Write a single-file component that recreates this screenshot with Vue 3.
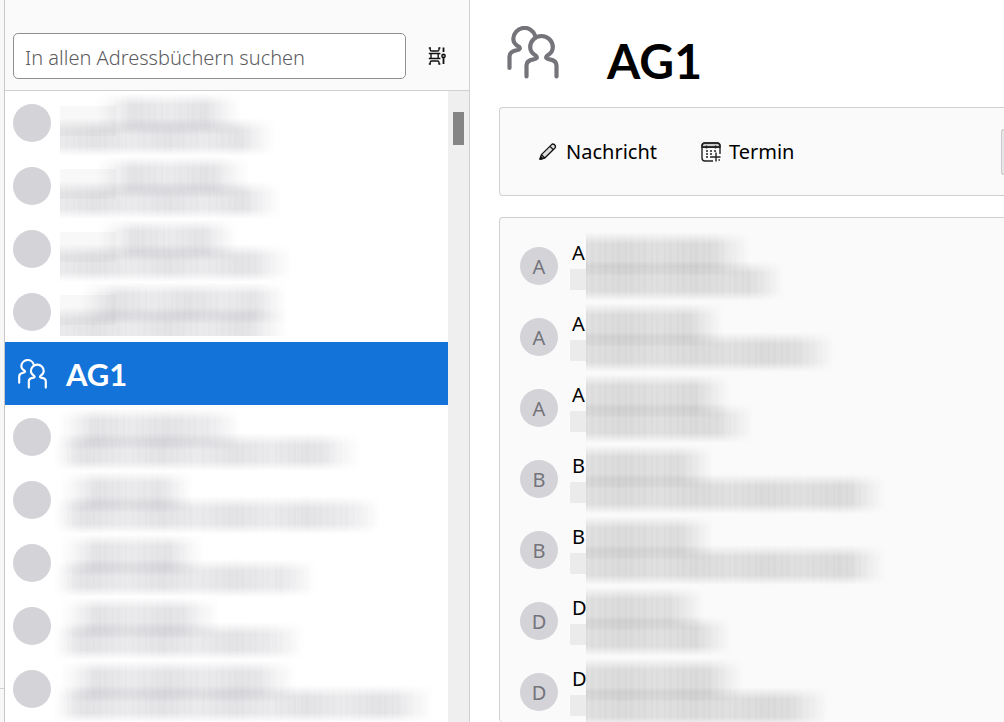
<script setup>
import { ref } from "vue";

const search = ref('');
const selectedId = ref(5);

// indent and widths of the blurred name and detail lines, in px
const contacts = ref([
    { id: 1, indent: 36, name: 146, detail: 216 },
    { id: 2, indent: 36, name: 154, detail: 222 },
    { id: 3, indent: 38, name: 140, detail: 232 },
    { id: 4, indent: 20, name: 208, detail: 228, cut: true },
    { id: 5, group: 'AG1' },
    { id: 6, wide: true, indent: 4, name: 182, detail: 306 },
    { id: 7, wide: true, indent: 6, name: 134, detail: 326 },
    { id: 8, wide: true, indent: 6, name: 144, detail: 262 },
    { id: 9, wide: true, indent: 6, name: 160, detail: 250 },
    { id: 10, wide: true, indent: 6, name: 236, detail: 380 },
])

const members = ref([
    { id: 1, initial: 'A', name: 164, detail: 198 },
    { id: 2, initial: 'A', name: 138, detail: 248 },
    { id: 3, initial: 'A', name: 145, detail: 168 },
    { id: 4, initial: 'B', name: 128, detail: 300 },
    { id: 5, initial: 'B', name: 128, detail: 300 },
    { id: 6, initial: 'D', name: 118, detail: 146 },
    { id: 7, initial: 'D', name: 158, detail: 242 },
])

function px(value) {
    return value + 'px';
}
</script>

<template>
    <div class="page">
        <div class="edge">
            <div class="edge-foot"></div>
        </div>

        <aside class="sidebar">
            <header class="search-bar">
                <input v-model="search" type="text" class="search-input" aria-label="In allen Adressbüchern suchen"
                    placeholder="In allen Adressbüchern suchen" />
                <button class="icon-button" type="button" aria-label="Anzeigeoptionen">
                    <svg width="20" height="18" viewBox="0 0 20 18" fill="none" stroke="#111" stroke-width="1.4">
                        <path d="M.8 1H2.2V2.4Q2.2 4 3.8 4H9.4Q11 4 11 2.4V1H12.4" />
                        <path d="M.8 6.5H12.4M.8 11.5H12.4M3 6.5V11.5M10.2 6.5V11.5" />
                        <path d="M.8 17H2.2V15.6Q2.2 14 3.8 14H9.4Q11 14 11 15.6V17H12.4" />
                        <path d="M15.5 .5V5M15.5 11V17" stroke-width="1.8" />
                        <circle cx="15.5" cy="9" r="1.7" fill="#999" />
                    </svg>
                </button>
            </header>

            <div class="list-area">
                <ul class="contact-list">
                    <template v-for="item in contacts" :key="item.id">
                        <li v-if="item.group" class="contact group" :class="{ selected: item.id === selectedId }">
                            <svg class="group-icon" viewBox="0 0 54 53" fill="none" stroke="currentColor"
                                stroke-width="3.8" stroke-linecap="round">
                                <path d="M3.5 42V30.5C3.5 27 7 25 10.5 24.3C13.8 23.7 14.6 22.4 13 20.8C9.5 18.8 7.3 16 7.3 12.7A11.2 11.2 0 0 1 29.2 9.8" />
                                <path d="M20.5 50.5V39.5C20.5 36 24 34 27.5 33.4C30.8 32.8 31.6 31.6 30 29.8C26.5 27.8 24.2 25 24.2 21.3A11.3 11.3 0 0 1 46.8 21.3C46.8 25 44.5 27.8 41 29.8C39.4 31.6 40.2 32.8 43.5 33.4C47 34 50.5 36 50.5 39.5V50.5" />
                            </svg>
                            <span class="group-name">{{ item.group }}</span>
                        </li>
                        <li v-else class="contact">
                            <span class="avatar"></span>
                            <div class="contact-lines" :class="{ wide: item.wide, cut: item.cut }">
                                <div class="smear smear-name"
                                    :style="{ marginLeft: px(item.indent), width: px(item.name) }"></div>
                                <div class="smear smear-detail" :style="{ width: px(item.detail) }"></div>
                            </div>
                        </li>
                    </template>
                </ul>
                <div class="scroll-track">
                    <div class="scroll-thumb"></div>
                </div>
            </div>
        </aside>

        <main class="content">
            <header class="title-bar">
                <svg class="title-icon" viewBox="0 0 54 53" fill="none" stroke="currentColor" stroke-width="4.2"
                    stroke-linecap="round">
                    <path d="M3.5 42V30.5C3.5 27 7 25 10.5 24.3C13.8 23.7 14.6 22.4 13 20.8C9.5 18.8 7.3 16 7.3 12.7A11.2 11.2 0 0 1 29.2 9.8" />
                    <path d="M20.5 50.5V39.5C20.5 36 24 34 27.5 33.4C30.8 32.8 31.6 31.6 30 29.8C26.5 27.8 24.2 25 24.2 21.3A11.3 11.3 0 0 1 46.8 21.3C46.8 25 44.5 27.8 41 29.8C39.4 31.6 40.2 32.8 43.5 33.4C47 34 50.5 36 50.5 39.5V50.5" />
                </svg>
                <h1 class="title">AG1</h1>
            </header>

            <section class="card toolbar">
                <button class="tool-button" type="button">
                    <svg width="20" height="20" viewBox="0 0 20 20" fill="none" stroke="#111" stroke-width="1.3"
                        stroke-linejoin="round">
                        <path d="M2 17L3.4 12.6L13.6 2.6Q15 1.4 16.6 2.8T17 6L6.8 16Z" fill="#ddd" />
                        <path d="M12 4.4L15.2 7.6M3.4 12.6L6.8 16" />
                        <path d="M2 17.4L2.8 14.6L4.8 16.6Z" fill="#111" />
                    </svg>
                    <span>Nachricht</span>
                </button>
                <button class="tool-button" type="button">
                    <svg width="20" height="20" viewBox="0 0 20 20" fill="none" stroke="#222" stroke-width="1.4">
                        <path d="M1 5V4Q1 1 4 1H16Q19 1 19 4V5Z" fill="#ccc" />
                        <path d="M12 19H4Q1 19 1 16V4Q1 1 4 1H16Q19 1 19 4V12" />
                        <path d="M1 5.2H19M5.5 3.4V6.6M14.5 3.4V6.6" />
                        <path d="M5 9H7M9 9H11M13 9H15M5 12H7M9 12H11M5 15H7M9 15H11" />
                        <path d="M15 10.5V19.5M11 15H19.5" />
                        <path d="M17.5 18H19" />
                    </svg>
                    <span>Termin</span>
                </button>
                <button class="more-button" type="button" aria-label="Bearbeiten"></button>
            </section>

            <section class="card members">
                <ul class="member-list">
                    <li v-for="member in members" :key="member.id" class="member">
                        <span class="avatar">{{ member.initial }}</span>
                        <div class="member-lines">
                            <div class="member-line">
                                <span class="member-text">{{ member.initial }}</span>
                                <div class="smear smear-member" :style="{ width: px(member.name) }"></div>
                            </div>
                            <div class="member-line second">
                                <span class="stub"></span>
                                <div class="smear smear-member" :style="{ width: px(member.detail) }"></div>
                            </div>
                        </div>
                    </li>
                </ul>
            </section>
        </main>
    </div>
</template>

<style>
body {
    margin: 0;
}
</style>

<style scoped>
.page {
    display: flex;
    height: 100vh;
    overflow: hidden;
    background: white;
    color: #000;
    font-family: "Noto Sans", "Open Sans", sans-serif;
    font-size: 20px;
}

.page * {
    box-sizing: border-box;
}

ul {
    list-style: none;
    margin: 0;
    padding: 0;
}

button {
    font: inherit;
    color: inherit;
    padding: 0;
    border: none;
    background: none;
    cursor: pointer;
}

.edge {
    flex: none;
    display: flex;
    flex-direction: column;
    justify-content: flex-end;
    width: 5px;
    background: #f7f7f8;
    border-right: 1px solid #c8c8cb;
}

.edge-foot {
    height: 34px;
    border-top: 1px solid #d0d0d3;
}

.sidebar {
    flex: 0 1 465px;
    display: flex;
    flex-direction: column;
    min-width: 0;
    border-right: 1px solid #d0d0d3;
}

.search-bar {
    flex: none;
    display: flex;
    align-items: center;
    gap: 22px;
    padding: 33px 21px 11px 8px;
    background: #fafafa;
    border-bottom: 1px solid #d0d0d3;
}

.search-input {
    flex: 1;
    min-width: 0;
    height: 46px;
    padding: 2px 11px 0;
    border: 1px solid #8f8f94;
    border-radius: 5px;
    background: white;
    font: inherit;
    font-weight: 300;
}

.search-input::placeholder {
    color: #5c5c60;
    opacity: 1;
}

.icon-button {
    display: flex;
}

.list-area {
    flex: 1;
    display: flex;
    min-height: 0;
}

.contact-list {
    flex: 1;
    min-width: 0;
    overflow: hidden;
}

.contact {
    display: flex;
    align-items: center;
    height: 63px;
    padding-left: 8px;
}

.avatar {
    flex: none;
    display: flex;
    align-items: center;
    justify-content: center;
    width: 38px;
    height: 38px;
    padding-top: 2px;
    border-radius: 50%;
    background: #d3d3d8;
    color: #74747a;
}

.group {
    gap: 18px;
    margin-top: -1px;
    padding-left: 12px;
}

.selected {
    background: #1373d9;
    color: white;
}

.group-icon {
    width: 31px;
    height: 30px;
}

.group-name {
    font: 700 31px "Lato", sans-serif;
}

.contact-lines {
    align-self: stretch;
    flex: 1;
    min-width: 0;
    margin-left: 9px;
    padding-top: 2px;
    background: linear-gradient(#f8f8f8, #f8f8f8) 0 15px / 56px 30px no-repeat;
}

.contact-lines.wide {
    margin-left: 3px;
    padding-top: 3px;
    background: none;
}

.contact-lines.cut {
    margin-bottom: 7px;
    overflow: hidden;
}

/* striped bar that fades out towards its edges */
.smear {
    --fade-left: 0px;
    background:
        repeating-linear-gradient(90deg, rgba(60, 60, 80, 0.01) 0 2px, transparent 2px 5px, rgba(60, 60, 80, 0.01) 5px 8px, transparent 8px 13px),
        repeating-linear-gradient(90deg, rgba(60, 60, 80, 0.1) 0, rgba(60, 60, 80, 0.14) 36px, rgba(60, 60, 80, 0.1) 72px);
    mask-image:
        linear-gradient(90deg, transparent, #000 var(--fade-left), #000 calc(100% - 36px), transparent),
        linear-gradient(transparent, #000 12px, #000 calc(100% - 10px), transparent);
    mask-composite: intersect;
}

.smear-name {
    --fade-left: 36px;
    height: 42px;
}

.smear-detail {
    height: 38px;
    margin-top: -17px;
}

.wide .smear-detail {
    --fade-left: 24px;
}

.scroll-track {
    flex: none;
    width: 21px;
    padding: 21px 5px 0;
    background: #efefef;
}

.scroll-thumb {
    height: 33px;
    background: #858585;
}

.content {
    flex: 1;
    min-width: 0;
    display: flex;
    flex-direction: column;
    padding-left: 29px;
}

.title-bar {
    flex: none;
    display: flex;
    gap: 47px;
    height: 107px;
    padding: 26px 0 0 7px;
}

.title-icon {
    width: 54px;
    height: 53px;
    color: #74747a;
}

.title {
    margin: 0;
    padding-top: 6px;
    font: 700 48px "Lato", sans-serif;
}

.card {
    background: #fafafa;
    border: 1px solid #d0d0d3;
    border-right: none;
    border-radius: 4px 0 0 4px;
}

.toolbar {
    flex: none;
    display: flex;
    align-items: center;
    gap: 44px;
    height: 89px;
    padding-left: 38px;
}

.tool-button {
    display: flex;
    align-items: center;
    gap: 8px;
}

.more-button {
    width: 3px;
    height: 46px;
    margin-left: auto;
    border: 1px solid #c8c8cb;
    border-right: none;
    border-radius: 4px 0 0 4px;
    background: #e8e8ea;
}

.members {
    flex: 1;
    min-height: 0;
    margin-top: 21px;
    padding: 12px 0 0 20px;
    border-bottom: none;
    overflow: hidden;
}

.member {
    display: flex;
    align-items: center;
    height: 71px;
}

.member-lines {
    align-self: stretch;
    margin-left: 12px;
    padding-top: 2px;
}

.member-line {
    display: flex;
    height: 44px;
}

.member-line.second {
    height: 40px;
    margin-top: -15px;
}

.member-text {
    width: 16px;
    padding-left: 2px;
    line-height: 42px;
}

.stub {
    width: 16px;
    height: 21px;
    margin-top: 8px;
    background: #ebebeb;
}

.smear-member {
    background:
        repeating-linear-gradient(90deg, rgba(0, 0, 0, 0.01) 0 2px, transparent 2px 5px, rgba(0, 0, 0, 0.01) 5px 8px, transparent 8px 13px),
        repeating-linear-gradient(90deg, rgba(0, 0, 0, 0.1) 0, rgba(0, 0, 0, 0.12) 36px, rgba(0, 0, 0, 0.1) 72px);
}
</style>
